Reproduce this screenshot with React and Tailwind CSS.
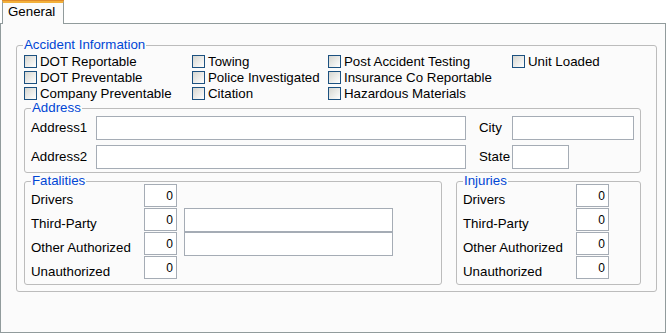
import React from "react";

function Group({ title, className, children }) {
  return (
    <div className={`relative border border-[#bcbcbc] rounded-[3px] ${className}`}>
      <span className="absolute left-[6px] top-[-9px] px-[1px] leading-[15px] text-[#0046d5] bg-[#fbfbfb] whitespace-nowrap">
        {title}
      </span>
      {children}
    </div>
  );
}

function Check({ label }) {
  return (
    <div className="flex items-start h-[16px]">
      <span className="mt-[1px] w-[13px] h-[13px] shrink-0 border border-[#1c5180] bg-[linear-gradient(135deg,#d6d6d0,#ffffff)]" />
      <span className="ml-[3px] leading-[16px] whitespace-nowrap">{label}</span>
    </div>
  );
}

function Num() {
  return (
    <div className="w-[33px] h-[23px] border border-[#a5acb5] bg-white flex items-center justify-end pr-[3px] text-[12px] leading-[14px]">
      0
    </div>
  );
}

function CountRow({ label, wide }) {
  return (
    <div className="flex h-[24px]">
      <div className="w-[113px] pt-[8px] leading-[16px] whitespace-nowrap">{label}</div>
      <Num />
      {wide && <div className="ml-[7px] w-[209px] h-[24px] border border-[#a5acb5] bg-white" />}
    </div>
  );
}

export default function App() {
  return (
    <div className="w-[666px] h-[333px] bg-white text-[13.3px] text-black font-['Liberation_Sans',Arial,sans-serif] flex flex-col">
      <div className="flex">
        <div className="relative z-10 ml-[2px] -mb-px w-[62px] h-[24px] border-t-[3px] border-t-[#f2b03a] border-x border-x-[#919b9c] bg-[#fbfbfb] pl-[5px] pt-[1px] leading-[15px]">
          <div className="absolute left-[-1px] right-[-1px] top-[-3px] h-[1px] bg-[#e08a2a]" />
          General
        </div>
      </div>
      <div className="h-[310px] border border-[#919b9c] bg-[#fbfbfb] pt-[21px] pl-[15px]">
        <Group title="Accident Information" className="w-[641px] pt-[8px] pl-[7px] pr-[15px] pb-[6px]">
          <div className="grid grid-cols-[168px_136px_184px_1fr]">
            <Check label="DOT Reportable" />
            <Check label="Towing" />
            <Check label="Post Accident Testing" />
            <Check label="Unit Loaded" />
            <Check label="DOT Preventable" />
            <Check label="Police Investigated" />
            <Check label="Insurance Co Reportable" />
            <div />
            <Check label="Company Preventable" />
            <Check label="Citation" />
            <Check label="Hazardous Materials" />
            <div />
          </div>

          <Group title="Address" className="mt-[6px] pt-[7px] pb-[3px] pl-[6px] pr-[6px]">
            <div className="flex items-center h-[24px]">
              <div className="w-[65px]">Address1</div>
              <div className="w-[370px] h-[24px] border border-[#a5acb5] bg-white" />
              <div className="ml-[13px] w-[33px]">City</div>
              <div className="w-[122px] h-[24px] border border-[#a5acb5] bg-white" />
            </div>
            <div className="flex items-center h-[24px] mt-[5px]">
              <div className="w-[65px]">Address2</div>
              <div className="w-[370px] h-[24px] border border-[#a5acb5] bg-white" />
              <div className="ml-[13px] w-[33px]">State</div>
              <div className="w-[57px] h-[24px] border border-[#a5acb5] bg-white" />
            </div>
          </Group>

          <div className="mt-[8px] flex gap-[14px]">
            <Group title="Fatalities" className="w-[418px] pt-[2px] pb-[4px] pl-[6px]">
              <CountRow label="Drivers" />
              <CountRow label="Third-Party" wide />
              <CountRow label="Other Authorized" wide />
              <CountRow label="Unauthorized" />
            </Group>
            <Group title="Injuries" className="w-[185px] pt-[2px] pb-[4px] pl-[6px]">
              <CountRow label="Drivers" />
              <CountRow label="Third-Party" />
              <CountRow label="Other Authorized" />
              <CountRow label="Unauthorized" />
            </Group>
          </div>
        </Group>
      </div>
    </div>
  );
}
